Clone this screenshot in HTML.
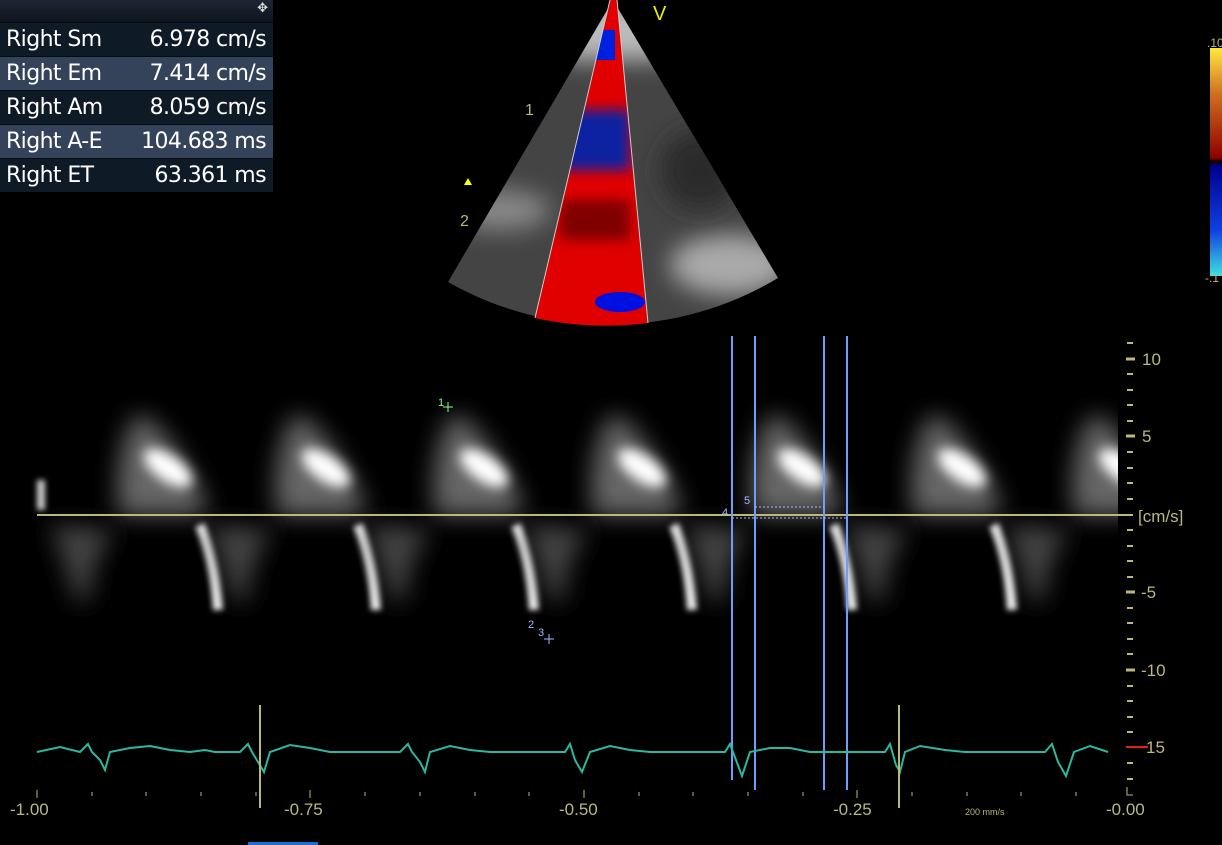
<!DOCTYPE html>
<html><head><meta charset="utf-8"><style>
html,body{margin:0;padding:0;background:#000;width:1222px;height:845px;overflow:hidden;font-family:"Liberation Sans",sans-serif}
#tbl{position:absolute;left:0;top:0;width:273px;background:#0f1a27}
#tbl .hd{height:22px;background:linear-gradient(#1c2633,#0e141c);color:#ddd;text-align:right;font-size:13px;padding-right:5px;box-sizing:border-box}
.r{height:33px;border-top:1px solid #050a10;display:flex;justify-content:space-between;align-items:center;padding:0 7px 0 6px;color:#fff;font-size:22px;font-family:"DejaVu Sans","Liberation Sans",sans-serif;letter-spacing:-0.6px}
.r.a{background:#34435a}
</style></head><body>
<div id="tbl"><div class="hd">✥</div>
<div class="r"><span>Right Sm</span><span>6.978 cm/s</span></div>
<div class="r a"><span>Right Em</span><span>7.414 cm/s</span></div>
<div class="r"><span>Right Am</span><span>8.059 cm/s</span></div>
<div class="r a"><span>Right A-E</span><span>104.683 ms</span></div>
<div class="r"><span>Right ET</span><span>63.361 ms</span></div>
</div>
<svg width="1222" height="845" style="position:absolute;left:0;top:0" xmlns="http://www.w3.org/2000/svg">
<defs>
<filter id="b6" filterUnits="userSpaceOnUse" x="0" y="0" width="1222" height="845"><feGaussianBlur stdDeviation="6"/></filter>
<filter id="b3" filterUnits="userSpaceOnUse" x="0" y="0" width="1222" height="845"><feGaussianBlur stdDeviation="3"/></filter>
<filter id="b12" filterUnits="userSpaceOnUse" x="0" y="0" width="1222" height="845"><feGaussianBlur stdDeviation="12"/></filter>
<linearGradient id="cb" x1="0" y1="0" x2="0" y2="1">
<stop offset="0" stop-color="#ffe840"/><stop offset="0.2" stop-color="#d07020"/><stop offset="0.48" stop-color="#900000"/><stop offset="0.5" stop-color="#000"/><stop offset="0.52" stop-color="#000090"/><stop offset="0.8" stop-color="#1040e0"/><stop offset="1" stop-color="#40e0e0"/></linearGradient>
<clipPath id="sec"><path d="M613,0 L448,282 A327,327 0 0 0 778,278 Z"/></clipPath>
<clipPath id="col"><path d="M610,0 L535,318 A327,327 0 0 0 648,323 L617,0 Z"/></clipPath>
</defs>
<g clip-path="url(#sec)">
<rect x="440" y="0" width="345" height="330" fill="#444"/>
<rect x="560" y="0" width="110" height="60" fill="#bbb" filter="url(#b12)"/>
<ellipse cx="500" cy="210" rx="50" ry="20" fill="#888" filter="url(#b12)"/>
<ellipse cx="730" cy="265" rx="60" ry="30" fill="#aaa" filter="url(#b12)"/>
<ellipse cx="700" cy="170" rx="40" ry="40" fill="#2a2a2a" filter="url(#b12)"/>
</g>
<g clip-path="url(#col)">
<rect x="530" y="0" width="120" height="330" fill="#e00000"/>
<rect x="560" y="110" width="70" height="60" fill="#1020a0" filter="url(#b6)"/>
<rect x="590" y="30" width="25" height="30" fill="#0020e0"/>
<rect x="560" y="200" width="70" height="40" fill="#800000" filter="url(#b6)"/>
<ellipse cx="620" cy="302" rx="25" ry="10" fill="#0010e0"/>
</g>
<path d="M535,318 L610,0 M648,323 L617,0" stroke="#ccc" stroke-width="1"/>
<text x="653" y="20" fill="#e8f000" font-size="20">V</text>
<text x="525" y="115" fill="#bdb77a" font-size="16">1</text>
<text x="460" y="226" fill="#bdb77a" font-size="16">2</text>
<path d="M464,185 l4,-7 l4,7z" fill="#ff0"/>
<rect x="1210" y="48" width="12" height="228" fill="url(#cb)"/>
<text x="1207" y="47" fill="#bdb77a" font-size="12">.10</text>
<text x="1205" y="282" fill="#bdb77a" font-size="12">-.1</text>
<g>
<g id="beat">
<path d="M118,470 Q130,400 150,420 Q175,440 205,500 L205,515 L118,515Z" fill="#666" filter="url(#b12)"/>
<ellipse cx="168" cy="468" rx="28" ry="13" transform="rotate(35 168 468)" fill="#fff" filter="url(#b6)"/>
<path d="M50,525 Q65,560 75,600 L90,600 Q90,560 115,530Z" fill="#444" filter="url(#b12)"/>
<path d="M200,525 Q215,560 218,610" stroke="#eee" stroke-width="10" fill="none" filter="url(#b3)"/>
</g>
<use href="#beat" x="158"/>
<use href="#beat" x="316"/>
<use href="#beat" x="474"/>
<use href="#beat" x="634"/>
<use href="#beat" x="794"/>
<use href="#beat" x="955"/>
<rect x="37" y="480" width="8" height="30" fill="#ccc" filter="url(#b3)"/>
</g>
<rect x="1118" y="330" width="104" height="515" fill="#000"/>
<line x1="37" y1="515" x2="1133" y2="515" stroke="#bdb77a" stroke-width="2"/>
<g stroke="#6e9cff" stroke-width="2">
<line x1="732" y1="336" x2="732" y2="780"/><line x1="755" y1="336" x2="755" y2="790"/>
<line x1="824" y1="336" x2="824" y2="790"/><line x1="847" y1="336" x2="847" y2="790"/>
</g>
<path d="M732,518 H847 M755,507 H824" stroke="#9fb8ff" stroke-dasharray="2 2"/>
<text x="722" y="516" fill="#9fb8ff" font-size="11">4</text>
<text x="744" y="504" fill="#9fb8ff" font-size="11">5</text>
<text x="438" y="406" fill="#8f8" font-size="11">1</text>
<path d="M448,402v10M443,407h10" stroke="#8f8"/>
<text x="528" y="628" fill="#9fb8ff" font-size="11">2</text>
<text x="538" y="636" fill="#9fb8ff" font-size="11">3</text>
<path d="M549,634v10M544,639h10" stroke="#9fb8ff"/>
<g stroke="#bdb77a" stroke-width="2">
<path d="M1127,343h6M1127,374h6M1127,390h6M1127,405h6M1127,421h6M1127,452h6M1127,468h6M1127,483h6M1127,499h6M1127,530h6M1127,546h6M1127,561h6M1127,577h6M1127,608h6M1127,623h6M1127,639h6M1127,654h6M1127,686h6M1127,701h6M1127,717h6M1127,732h6M1127,763h6M1127,779h6"/>
<path d="M1126,359h9M1126,436h9M1126,592h9M1126,670h9" stroke-width="3"/>
</g>
<line x1="1126" y1="747" x2="1148" y2="747" stroke="#e02020" stroke-width="2"/>
<path d="M1127,787v8h6" stroke="#bdb77a" fill="none"/>
<g fill="#bdb77a" font-size="17">
<text x="1142" y="365">10</text><text x="1142" y="442">5</text>
<text x="1138" y="522">[cm/s]</text>
<text x="1141" y="598">-5</text><text x="1141" y="676">-10</text><text x="1146" y="753">15</text>
<text x="10" y="815">-1.00</text><text x="284" y="815">-0.75</text><text x="559" y="815">-0.50</text>
<text x="833" y="815">-0.25</text><text x="1106" y="815">-0.00</text>
</g>
<text x="965" y="815" fill="#bdb77a" font-size="9">200 mm/s</text>
<g stroke="#bdb77a"><path d="M37,790v8M92,792v4M146,792v4M201,792v4M256,792v4M310,790v8M365,792v4M420,792v4M475,792v4M529,792v4M584,790v8M639,792v4M693,792v4M748,792v4M803,792v4M857,790v8M912,792v4M967,792v4M1021,792v4M1076,792v4"/></g>
<polyline fill="none" stroke="#2ab8a0" stroke-width="2" points="37,752 60,747 80,752 88,744 92,752 100,760 105,770 110,752 130,748 150,746 170,750 190,752 205,750 215,752 240,752 248,744 252,752 258,762 264,772 270,752 290,745 310,748 330,752 350,752 370,752 400,752 408,744 412,752 420,762 425,772 430,752 450,746 470,750 490,752 510,752 530,752 565,752 570,744 575,760 582,772 590,752 610,746 630,750 650,752 680,752 725,752 730,744 736,760 742,776 750,752 770,748 790,748 810,752 830,752 845,752 885,752 890,744 896,765 900,772 905,752 920,746 945,750 965,752 990,752 1045,752 1052,744 1058,762 1066,776 1074,752 1090,746 1108,752"/>
<line x1="260" y1="705" x2="260" y2="808" stroke="#bdb77a" stroke-width="2"/>
<line x1="899" y1="705" x2="899" y2="808" stroke="#bdb77a" stroke-width="2"/>
<rect x="248" y="842" width="70" height="3" fill="#1a6fd0"/>
</svg>
</body></html>
